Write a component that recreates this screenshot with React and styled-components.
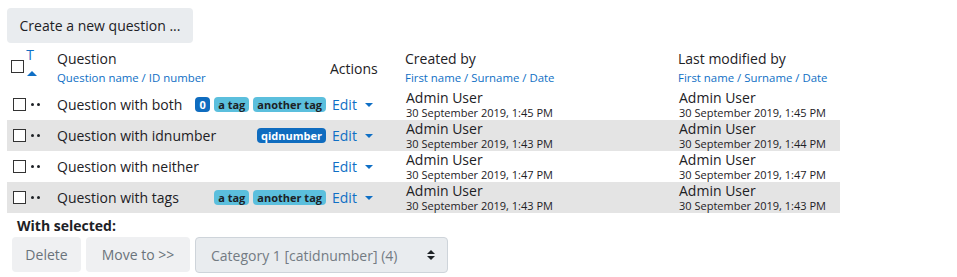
import React from 'react';
import styled, { createGlobalStyle } from 'styled-components';

const GlobalStyle = createGlobalStyle`
  body {
    margin: 0;
    background: #fff;
    font-family: "Open Sans", "Noto Sans", sans-serif;
    color: #1d2125;
  }
`;

const Page = styled.div`
  padding: 8px 0 0 7px;
`;

const CreateButton = styled.button`
  font-family: inherit;
  font-size: 14px;
  color: #1d2125;
  background: #e9ecef;
  border: none;
  border-radius: 4px;
  height: 35px;
  width: 186px;
  padding: 0;
`;

const Table = styled.div`
  width: 833px;
  display: grid;
  grid-template-columns: 45px 275px 73px 273px 167px;
`;

const HeadCell = styled.div`
  height: 46px;
  display: flex;
  flex-direction: column;
  justify-content: ${p => (p.$center ? 'center' : 'flex-start')};
  padding: ${p => p.$pad || '0'};
  box-sizing: border-box;
`;

const HeadTitle = styled.div`
  font-size: 14px;
  line-height: 19px;
`;

const SortLink = styled.div`
  font-size: 11.4px;
  line-height: 16px;
  margin-top: 2px;
  color: #0f6fc5;
`;

const Box = styled.span`
  display: inline-block;
  width: 11px;
  height: 11px;
  border: 1px solid #333;
  background: #fff;
`;

const HeadSelect = styled.div`
  display: flex;
  align-items: flex-start;
  padding: 5px 0 0 4px;
  gap: 3px;
`;

const SortIcon = styled.div`
  display: flex;
  flex-direction: column;
  align-items: center;
  color: #0f6fc5;
  font-size: 14px;
  line-height: 14px;
  & > span:first-child { margin-left: -4px; }
`;

const Row = styled.div`
  display: contents;
  & > div { background: ${p => (p.$shade ? '#e4e4e4' : 'transparent')}; }
`;

const Cell = styled.div`
  height: 31px;
  display: flex;
  align-items: center;
  box-sizing: border-box;
  padding: ${p => p.$pad || '0'};
`;

const Dots = styled.span`
  display: inline-flex;
  gap: 3px;
  margin-left: 5px;
  & > i {
    width: 3px;
    height: 3px;
    border-radius: 50%;
    background: #1d2125;
  }
`;

const QName = styled.span`
  font-size: 14px;
  flex: 1;
`;

const Badges = styled.span`
  display: flex;
  gap: 4px;
`;

const Badge = styled.span`
  font-size: 11px;
  font-weight: 700;
  line-height: 15px;
  padding: 0 4px;
  min-width: 15px;
  box-sizing: border-box;
  text-align: center;
  border-radius: 4px;
  background: ${p => (p.$blue ? '#0f6cbf' : '#5bbfdd')};
  color: ${p => (p.$blue ? '#fff' : '#1d2125')};
`;

const EditLink = styled.span`
  color: #0f6fc5;
  font-size: 14px;
  display: flex;
  align-items: center;
  gap: 8px;
  &::after {
    content: '';
    border-left: 4px solid transparent;
    border-right: 4px solid transparent;
    border-top: 4px solid #0f6fc5;
  }
`;

const UserCell = styled(Cell)`
  flex-direction: column;
  align-items: flex-start;
  justify-content: center;
`;

const UserName = styled.div`
  font-size: 14px;
  line-height: 16px;
`;

const DateText = styled.div`
  font-size: 11px;
  line-height: 14px;
`;

const Footer = styled.div`
  padding: 4px 0 0 10px;
`;

const Label = styled.div`
  font-size: 14px;
  font-weight: 700;
  line-height: 17px;
`;

const Actions = styled.div`
  display: flex;
  gap: 5px;
  margin: 3px 0 0 -5px;
`;

const GreyButton = styled.button`
  font-family: inherit;
  font-size: 14px;
  color: #6a737b;
  background: #eff0f2;
  border: none;
  border-radius: 4px;
  height: 35px;
  width: ${p => p.$w}px;
  padding: 0;
`;

const Select = styled.div`
  width: 253px;
  height: 36px;
  box-sizing: border-box;
  border: 1px solid #ced4da;
  border-radius: 4px;
  background: #e9ecef;
  color: #737b83;
  font-size: 14px;
  display: flex;
  align-items: center;
  justify-content: space-between;
  padding: 0 12px 0 15px;
`;

const Arrows = styled.svg`
  width: 8px;
  height: 10px;
`;

const rows = [
  { name: 'Question with both', badges: [['0', true], ['a tag'], ['another tag']], created: '1:45 PM', modified: '1:45 PM' },
  { name: 'Question with idnumber', badges: [['qidnumber', true]], created: '1:43 PM', modified: '1:44 PM', shade: true },
  { name: 'Question with neither', badges: [], created: '1:47 PM', modified: '1:47 PM' },
  { name: 'Question with tags', badges: [['a tag'], ['another tag']], created: '1:43 PM', modified: '1:43 PM', shade: true },
];

export default function App() {
  return (
    <Page>
      <GlobalStyle />
      <CreateButton>Create a new question ...</CreateButton>
      <Table>
        <HeadCell>
          <HeadSelect>
            <Box style={{ marginTop: 12 }} />
            <SortIcon>
              <span>T</span>
              <svg width="10" height="5" viewBox="0 0 10 5" style={{ marginTop: 9 }}>
                <path d="M0 5 L5 0 L10 5 Z" fill="#0f6fc5" />
              </svg>
            </SortIcon>
          </HeadSelect>
        </HeadCell>
        <HeadCell $pad="6px 0 0 5px">
          <HeadTitle>Question</HeadTitle>
          <SortLink>Question name / ID number</SortLink>
        </HeadCell>
        <HeadCell $center $pad="4px 0 0 3px">
          <HeadTitle>Actions</HeadTitle>
        </HeadCell>
        <HeadCell $pad="6px 0 0 5px">
          <HeadTitle>Created by</HeadTitle>
          <SortLink>First name / Surname / Date</SortLink>
        </HeadCell>
        <HeadCell $pad="6px 0 0 5px">
          <HeadTitle>Last modified by</HeadTitle>
          <SortLink>First name / Surname / Date</SortLink>
        </HeadCell>
        {rows.map(r => (
          <Row key={r.name} $shade={r.shade}>
            <Cell $pad="0 0 0 6px">
              <Box />
              <Dots><i /><i /></Dots>
            </Cell>
            <Cell $pad="0 1px 0 5px">
              <QName>{r.name}</QName>
              <Badges>
                {r.badges.map(([t, blue]) => (
                  <Badge key={t} $blue={blue}>{t}</Badge>
                ))}
              </Badges>
            </Cell>
            <Cell $pad="0 0 0 5px">
              <EditLink>Edit</EditLink>
            </Cell>
            <UserCell $pad="0 0 0 6px">
              <UserName>Admin User</UserName>
              <DateText>30 September 2019, {r.created}</DateText>
            </UserCell>
            <UserCell $pad="0 0 0 6px">
              <UserName>Admin User</UserName>
              <DateText>30 September 2019, {r.modified}</DateText>
            </UserCell>
          </Row>
        ))}
      </Table>
      <Footer>
        <Label>With selected:</Label>
        <Actions>
          <GreyButton $w={69}>Delete</GreyButton>
          <GreyButton $w={104}>Move to &gt;&gt;</GreyButton>
          <Select>
            <span>Category 1 [catidnumber] (4)</span>
            <Arrows viewBox="0 0 8 10">
              <path d="M0 4 L4 0 L8 4 Z M0 6 L4 10 L8 6 Z" fill="#1d2125" />
            </Arrows>
          </Select>
        </Actions>
      </Footer>
    </Page>
  );
}
